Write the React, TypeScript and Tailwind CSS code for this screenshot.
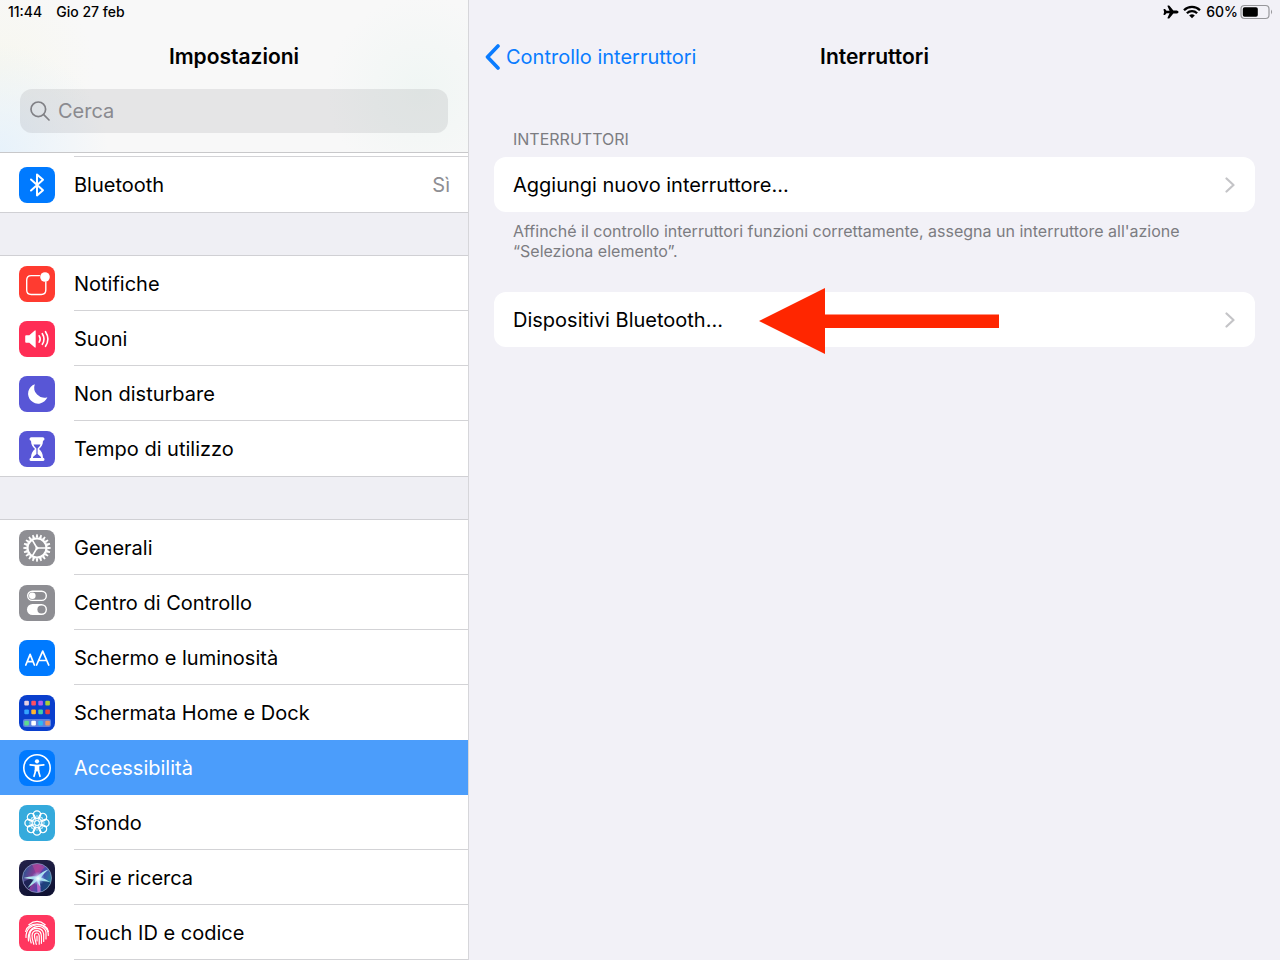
import type { ReactNode } from "react";
import { IoAirplane } from "react-icons/io5";

function Tile({ bg, children }: { bg: string; children: ReactNode }) {
  return (
    <svg viewBox="0 0 36 36" className="size-9 shrink-0 rounded-lg" style={{ background: bg }} fill="none" aria-hidden="true">
      {children}
    </svg>
  );
}

const BluetoothIcon = () => (
  <Tile bg="#007aff">
    <path d="M12 12.5 24 23.2 18 28.4V7.6l6 5.2L12 23.5" stroke="#fff" strokeWidth="2" strokeLinejoin="round" strokeLinecap="round" />
  </Tile>
);

const NotificationsIcon = () => (
  <Tile bg="#ff3b30">
    <path d="M20.500 9.600H12.200Q7.700 9.600 7.700 14.100V24Q7.700 28.500 12.200 28.500H22.300Q26.800 28.500 26.800 24V16" stroke="#fff" strokeWidth="1.400" strokeLinecap="round" />
    <circle cx="26" cy="11" r="4.800" fill="#fff" />
  </Tile>
);

const SoundsIcon = () => (
  <Tile bg="#ff2d55">
    <path d="M6.200 15.200q0-.9.9-.9h3.200l5.200-4.600q1.200-.9 1.200.5v15.600q0 1.400-1.200.5l-5.200-4.600H7.100q-.9 0-.9-.9z" fill="#fff" />
    <path d="M20.200 14.800Q22.200 18 20.200 21.200M23.300 12.700Q26.700 18 23.300 23.300M26.500 10.700Q31.300 18 26.500 25.300" stroke="#fff" strokeWidth="1.600" strokeLinecap="round" />
  </Tile>
);

const MoonIcon = () => (
  <Tile bg="#5856d6">
    <path d="M15.800 8.200A10 10 0 1 0 28.400 21.300 10.200 10.200 0 0 1 15.800 8.200z" fill="#fff" />
  </Tile>
);

const HourglassIcon = () => (
  <Tile bg="#5856d6">
    <path d="M12.300 6.200h11.400q1.800 0 1.800 1.700t-1.500 1.800c-.1 4-1.400 5.800-4 8.300 2.600 2.500 3.900 4.800 4 8.800q1.500.1 1.500 1.600t-1.800 1.600H12.300q-1.800 0-1.800-1.600T12 26.800c.1-4 1.400-6.300 4-8.800-2.600-2.500-3.900-4.300-4-8.300q-1.500-.1-1.500-1.800t1.800-1.700z" fill="#fff" />
    <path d="M14.500 13.500h7c-.7 1.900-1.700 2.700-2.900 4v5.500l3.400 3.100q.5.900-.5.900h-7q-1 0-.5-.9l3.400-3.100v-5.500c-1.200-1.300-2.200-2.100-2.900-4z" fill="#5856d6" />
  </Tile>
);

const teeth = Array.from({ length: 20 }, (_, i) => i * 18);

const GearIcon = () => (
  <Tile bg="#8e8e93">
    {teeth.map((a) => (
      <path key={a} d="M16.700 7.800 17.300 4.300h1.400l.6 3.500z" fill="#fff" transform={`rotate(${a} 18 18)`} />
    ))}
    <circle cx="18" cy="18" r="9.500" stroke="#fff" strokeWidth="2.200" />
    <circle cx="18" cy="18" r="1.600" fill="#fff" />
    <path d="M18 18h9.500M18 18 13.200 9.800M18 18l-4.800 8.200" stroke="#fff" strokeWidth="1.600" />
  </Tile>
);

const ControlsIcon = () => (
  <Tile bg="#8e8e93">
    <rect x="8.700" y="6.200" width="18.600" height="9.200" rx="4.600" stroke="#fff" strokeWidth="1.400" />
    <circle cx="13.300" cy="10.800" r="3.300" fill="#fff" />
    <rect x="8" y="19" width="20" height="11" rx="5.500" fill="#fff" />
    <circle cx="22.500" cy="24.500" r="4.100" fill="#8e8e93" />
  </Tile>
);

const DisplayIcon = () => (
  <Tile bg="#007aff">
    <path d="M6.800 25 11.100 14.400 15.400 25M8.300 21.600h5.600M17.600 25 23.700 11.100 29.700 25M19.700 20.500h8" stroke="#fff" strokeWidth="1.700" strokeLinejoin="round" strokeLinecap="round" />
  </Tile>
);

const homeColors = [
  ["#e6cfe2", "#ff4f62", "#b05cf0", "#a8cf35"],
  ["#34a4ff", "#ffb52e", "#44cfa6", "#e5403f"],
  ["#5edb8f", "#ffffff", "#2fb9f3", "#eb9566"],
];

const HomeIcon = () => (
  <Tile bg="#0a3fcd">
    <rect x="4" y="24" width="28" height="8" rx="2" fill="#5d82df" />
    {homeColors.map((row, r) =>
      row.map((c, i) => (
        <rect key={c} x={5.300 + i * 7} y={[5.800, 14.600, 25.800][r]} width="4.600" height="4.600" rx="1" fill={c} />
      )),
    )}
  </Tile>
);

const AccessibilityIcon = () => (
  <Tile bg="#007aff">
    <circle cx="18" cy="18" r="13.200" stroke="#fff" strokeWidth="1.600" />
    <circle cx="18" cy="11.300" r="2.100" fill="#fff" />
    <path d="M11.200 14.900 18 15.600 24.800 14.900M17 19.500 15 26.300M19 19.500 21 26.300" stroke="#fff" strokeWidth="1.700" strokeLinecap="round" strokeLinejoin="round" />
    <path d="M15.700 14.900h4.600v4.600l.4 2L18 21.200l-2.700.3.400-2z" fill="#fff" />
  </Tile>
);

const WallpaperIcon = () => (
  <Tile bg="#35aadc">
    {[0, 45, 90, 135, 180, 225, 270, 315].map((a) => (
      <g key={a} transform={`rotate(${a} 18 18)`} stroke="#fff" strokeWidth="1.300">
        <circle cx="18" cy="9.600" r="3.700" />
        <path d="M18 15.700Q14.800 13 18 10.500 21.200 13 18 15.700z" strokeWidth=".8" />
      </g>
    ))}
    <circle cx="18" cy="18" r="2.400" stroke="#fff" strokeWidth="1" />
  </Tile>
);

const SiriIcon = () => (
  <Tile bg="linear-gradient(160deg,#24224a,#0d1030)">
    <defs>
      <radialGradient id="siri-core">
        <stop offset="0" stopColor="#fff" />
        <stop offset=".3" stopColor="#d8f4ff" stopOpacity=".8" />
        <stop offset="1" stopColor="#7aaeff" stopOpacity="0" />
      </radialGradient>
      <linearGradient id="siri-orb" x1="0" y1=".3" x2="1" y2=".7">
        <stop offset="0" stopColor="#2a5fa0" />
        <stop offset=".4" stopColor="#a23fa5" />
        <stop offset=".65" stopColor="#4d55c4" />
        <stop offset="1" stopColor="#20aaae" />
      </linearGradient>
    </defs>
    <circle cx="18" cy="18" r="14.500" fill="url(#siri-orb)" fillOpacity=".85" />
    <path d="M4.500 22Q9 18 18 18.500 12 23 10 30 6 27 4.500 22z" fill="#1e2355" />
    <path d="M18 17Q25 19 31.500 23 28 30 22 32 21 23 18 17z" fill="#152f6a" fillOpacity=".7" />
    <path d="M13 4.500Q16 11 19 18 21 11 26 7 20 3 13 4.500z" fill="#c9489b" fillOpacity=".5" />
    <path d="M18.500 18Q22 24 21.500 32L18.500 32.400Q17.500 25 18.500 18z" fill="#d36fd0" fillOpacity=".8" />
    <path d="M4.500 18Q12 15.500 18 16.500 24 11 29.500 9.500 25 13 22 17.500 26 18.500 31 22 24 21 20.500 20.500 21 24 21.500 27 19 24 18 21 13 25 8.500 28 12 23 15 19.500 9 18.500 4.500 18z" fill="#b5f6f4" fillOpacity=".9" />
    <circle cx="19" cy="18.500" r="7" fill="url(#siri-core)" />
    <circle cx="18" cy="18" r="14.500" stroke="#98a5cc" strokeWidth=".7" />
  </Tile>
);

const TouchIcon = () => (
  <Tile bg="#ff375f">
    <g stroke="#fff" strokeWidth="1.200" strokeLinecap="round">
      <path d="M9.800 9.700Q18 3.200 26.200 9.700" />
      <path d="M6.600 16.500C8.500 6.500 27.500 6.500 29.400 16.500" />
      <path d="M7 22.500C6.200 5.800 29.800 5.800 29.300 20.500" />
      <path d="M9.500 26C7 7.800 27.800 8.200 27 19V24" />
      <path d="M12.200 28C9.500 20 9.800 13.500 18 13.400 24 13.500 25 18 24.700 22V26.500" />
      <path d="M14.800 29.200C13 24 10.800 15.800 18 15.700 22.500 15.800 22.800 20 22.400 28.300" />
      <path d="M17.300 29.300C16 24 13.600 18 18 18 21 18 20.200 23 20.200 29.200" />
      <path d="M18 21V26" />
    </g>
  </Tile>
);

type Item = { label: string; Icon: () => ReactNode; value?: string; active?: boolean };

const groups: Item[][] = [
  [{ label: "Bluetooth", Icon: BluetoothIcon, value: "Sì" }],
  [
    { label: "Notifiche", Icon: NotificationsIcon },
    { label: "Suoni", Icon: SoundsIcon },
    { label: "Non disturbare", Icon: MoonIcon },
    { label: "Tempo di utilizzo", Icon: HourglassIcon },
  ],
  [
    { label: "Generali", Icon: GearIcon },
    { label: "Centro di Controllo", Icon: ControlsIcon },
    { label: "Schermo e luminosità", Icon: DisplayIcon },
    { label: "Schermata Home e Dock", Icon: HomeIcon },
    { label: "Accessibilità", Icon: AccessibilityIcon, active: true },
    { label: "Sfondo", Icon: WallpaperIcon },
    { label: "Siri e ricerca", Icon: SiriIcon },
    { label: "Touch ID e codice", Icon: TouchIcon },
  ],
];

function SidebarRow({ item, divider }: { item: Item; divider: boolean }) {
  const { label, Icon, value, active } = item;
  return (
    <li className={active ? "bg-[#4b9dfb] text-white" : "bg-white text-black"}>
      <a href="#" aria-current={active ? "page" : undefined} className="flex h-[55px] items-stretch pl-[19px]">
        <span className="flex items-center">
          <Icon />
        </span>
        <span className={`ml-[19px] flex flex-1 items-center justify-between border-b pt-[2px] pr-[18px] ${divider && !active ? "border-[#d3d3d6]" : "border-transparent"}`}>
          <span>{label}</span>
          {value && <span className="text-[#8e8e93]">{value}</span>}
        </span>
      </a>
    </li>
  );
}

function Sidebar() {
  return (
    <aside className="flex w-[469px] shrink-0 flex-col border-r border-[#d6d6da] bg-[#efeff4]">
      <header className="border-b border-[#c8c8ca] bg-[#f8f8f8] bg-[radial-gradient(circle_at_0%_100%,#e7f2fb_0,transparent_22%),radial-gradient(circle_at_0%_45%,#f7f7ef_0,transparent_20%),radial-gradient(circle_at_90%_60%,#f0f6f4_0,transparent_22%)]">
        <div className="flex h-6 items-center gap-[14px] pl-2 text-sm font-medium">
          <span>11:44</span>
          <span>Gio 27 feb</span>
        </div>
        <h1 className="flex h-[65px] items-center justify-center text-[21px] font-semibold">Impostazioni</h1>
        <div className="px-5 pb-[19px]">
          <label className="flex h-11 items-center gap-2 rounded-xl bg-[#767680]/15 px-[10px] text-[#808085]">
            <svg viewBox="0 0 20 20" className="size-5 shrink-0" fill="none" stroke="currentColor" strokeWidth="1.700" strokeLinecap="round" aria-hidden="true">
              <circle cx="8.300" cy="8.300" r="7.300" />
              <path d="m13.700 13.700 5.300 5.300" />
            </svg>
            <input type="search" aria-label="Cerca" placeholder="Cerca" className="min-w-0 flex-1 bg-transparent text-xl outline-none placeholder:text-[#8a8a8f]" />
          </label>
        </div>
      </header>
      <nav className="flex flex-col gap-11 text-xl">
        {groups.map((items, g) => (
          <ul key={items[0].label} className={g === 0 ? "bg-white pt-[3px] shadow-[0_1px_0_#d0d0d4]" : "shadow-[0_-1px_0_#d0d0d4,0_1px_0_#d0d0d4]"}>
            {g === 0 && <li role="separator" className="ml-[74px] h-px bg-[#d3d3d6]" />}
            {items.map((item, i) => (
              <SidebarRow key={item.label} item={item} divider={g === 2 ? !items[i + 1]?.active : i < items.length - 1} />
            ))}
          </ul>
        ))}
      </nav>
    </aside>
  );
}

function WifiIcon() {
  return (
    <svg viewBox="0 0 18 14" className="h-[14px] w-[18px]" aria-hidden="true">
      <g fill="none" stroke="#000" strokeWidth="2.300">
        <path d="M1 5.200A11.300 11.300 0 0 1 17 5.200" />
        <path d="M3.900 8.200A7.200 7.200 0 0 1 14.100 8.200" />
      </g>
      <path d="M9 13.300 6.200 10.400Q9 8.200 11.800 10.400z" />
    </svg>
  );
}

function BatteryIcon() {
  return (
    <svg viewBox="0 0 34 16" className="h-4 w-[34px]" fill="none" aria-hidden="true">
      <rect x="1" y="1.500" width="28" height="13" rx="3.500" stroke="#97979b" strokeWidth="1.200" />
      <rect x="2.800" y="3.200" width="15" height="9.600" rx="1.800" fill="#000" />
      <path d="M31 5.600q2.200 2.400 0 4.800z" fill="#97979b" />
    </svg>
  );
}

function LinkCard({ label, children }: { label: string; children?: ReactNode }) {
  return (
    <button type="button" className="relative flex h-[55px] w-full items-center justify-between rounded-xl bg-white pr-5 pl-[19px] text-left text-xl">
      <span>{label}</span>
      <svg viewBox="0 0 10 16" className="h-4 w-[10px]" fill="none" stroke="#c4c4c7" strokeWidth="2.200" strokeLinecap="round" strokeLinejoin="round" aria-hidden="true">
        <path d="m1.500 1.500 7 6.500-7 6.500" />
      </svg>
      {children}
    </button>
  );
}

function Detail() {
  return (
    <main className="min-w-0 flex-1 bg-[#f2f1f7]">
      <div className="flex h-6 items-center justify-end pr-[6px] text-sm font-medium">
        <IoAirplane className="mr-1 size-4" aria-hidden="true" />
        <WifiIcon />
        <span className="mr-[2px] ml-[5px]">60%</span>
        <BatteryIcon />
      </div>
      <header className="grid h-[65px] grid-cols-[1fr_auto_1fr] items-center px-4 text-xl">
        <a href="#" className="flex items-center gap-[6px] text-[#0a7cff]">
          <svg viewBox="0 0 15 26" className="h-[26px] w-[15px]" fill="none" stroke="currentColor" strokeWidth="3.600" strokeLinecap="round" strokeLinejoin="round" aria-hidden="true">
            <path d="M13 2 2.500 13 13 24" />
          </svg>
          Controllo interruttori
        </a>
        <h2 className="text-[21px] font-semibold">Interruttori</h2>
      </header>
      <div className="px-[25px] pt-10">
        <h3 className="px-[19px] pb-2 text-base leading-5 text-[#7c7c81] uppercase">Interruttori</h3>
        <LinkCard label="Aggiungi nuovo interruttore..." />
        <p className="mb-[31px] px-[19px] pt-[9px] text-base leading-5 text-[#7c7c81]">
          Affinché il controllo interruttori funzioni correttamente, assegna un interruttore all'azione “Seleziona elemento”.
        </p>
        <LinkCard label="Dispositivi Bluetooth...">
          <svg viewBox="0 0 240 66" className="absolute -top-1 left-[265px] h-[66px] w-[240px]" fill="#ff2600" aria-hidden="true">
            <path d="M0 33 66 0v26.500h174v13.500H66V66z" />
          </svg>
        </LinkCard>
      </div>
    </main>
  );
}

export default function App() {
  return (
    <div className="flex min-h-screen bg-[#f2f1f7] font-['Inter',sans-serif] text-black">
      <Sidebar />
      <Detail />
    </div>
  );
}
